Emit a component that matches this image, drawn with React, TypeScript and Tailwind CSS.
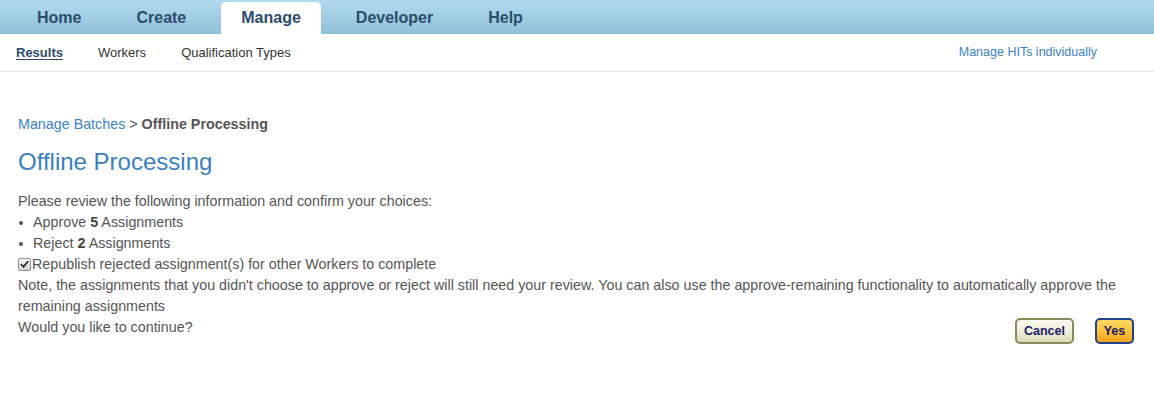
import React from "react";

const tabs = ["Home", "Create", "Manage", "Developer", "Help"];

function CheckMark() {
  return (
    <span className="mr-[1px] inline-flex h-[13px] w-[13px] items-center justify-center rounded-[2px] border border-[#8e8e8e] bg-gradient-to-b from-[#f4f4f4] to-[#d6d6d6]">
      <svg viewBox="0 0 10 10" className="h-[9px] w-[9px]">
        <path d="M1.5 5.2 L4 7.6 L8.6 1.8" fill="none" stroke="#2a2a2a" strokeWidth="1.9" strokeLinecap="round" strokeLinejoin="round" />
      </svg>
    </span>
  );
}

export default function App() {
  return (
    <div className="min-h-[403px] bg-white font-['Liberation_Sans',Arial,sans-serif]">
      {/* top tab bar */}
      <div className="flex h-[34px] items-end gap-[15px] bg-gradient-to-b from-[#b2daee] to-[#90c1d8] pl-[17px]">
        {tabs.map((t) =>
          t === "Manage" ? (
            <div key={t} className="flex h-[32px] items-center rounded-t-[5px] bg-white px-[20px] text-[16px] font-bold text-[#2b4c6d]">
              {t}
            </div>
          ) : (
            <div key={t} className="flex h-[32px] items-center px-[20px] text-[16px] font-bold text-[#2b4c6d]">
              {t}
            </div>
          )
        )}
      </div>

      {/* sub nav */}
      <div className="flex h-[38px] items-center justify-between border-b border-[#e6e6e6] pl-[16px] pr-[57px] text-[13px]">
        <div className="flex items-center gap-[35px]">
          <span className="font-bold text-[#2b4c6d] underline underline-offset-2">Results</span>
          <span className="text-[#333]">Workers</span>
          <span className="text-[#333]">Qualification Types</span>
        </div>
        <span className="text-[12.5px] text-[#3a7fc4]">Manage HITs individually</span>
      </div>

      {/* content */}
      <div className="pl-[18px] pr-[20px] pt-[42px] text-[14.3px] leading-[21px] text-[#555]">
        <div>
          <span className="text-[#3a84c6]">Manage Batches</span> &gt;{" "}
          <span className="font-bold">Offline Processing</span>
        </div>
        <h1 className="mt-[12px] text-[24px] leading-[29px] text-[#3a7fc2]">Offline Processing</h1>
        <div className="mt-[15px]">
          <div>Please review the following information and confirm your choices:</div>
          <div className="flex items-center">
            <span className="ml-[1px] mr-[10px] h-[4px] w-[4px] rounded-full bg-[#555]" />
            <span>
              Approve <b className="text-[#444]">5</b> Assignments
            </span>
          </div>
          <div className="flex items-center">
            <span className="ml-[1px] mr-[10px] h-[4px] w-[4px] rounded-full bg-[#555]" />
            <span>
              Reject <b className="text-[#444]">2</b> Assignments
            </span>
          </div>
          <div className="flex items-center">
            <CheckMark />
            <span>Republish rejected assignment(s) for other Workers to complete</span>
          </div>
          <div>
            Note, the assignments that you didn't choose to approve or reject will still need your review. You can also
            use the approve-remaining functionality to automatically approve the remaining assignments
          </div>
          <div className="flex h-[21px] items-start justify-between">
            <span>Would you like to continue?</span>
            <div className="mt-[1px] flex gap-[21px]">
              <button className="h-[26px] w-[59px] rounded-[5px] border-2 border-[#8b8a5c] bg-gradient-to-b from-[#fbfbf0] via-[#efefdb] to-[#d9d9b9] text-[12.5px] font-bold text-[#1c1a6a]">
                Cancel
              </button>
              <button className="h-[26px] w-[39px] rounded-[5px] border-2 border-[#23408e] bg-gradient-to-b from-[#ffd866] via-[#fbc23a] to-[#f0a41a] text-[12.5px] font-bold text-[#1c1a6a]">
                Yes
              </button>
            </div>
          </div>
        </div>
      </div>
    </div>
  );
}
